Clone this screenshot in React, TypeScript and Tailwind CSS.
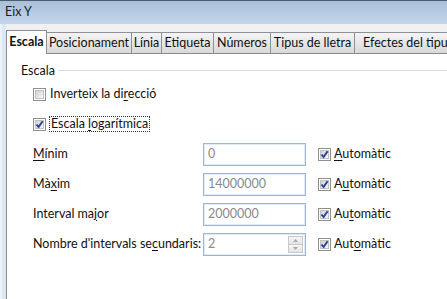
import React from 'react';

const TABS = [
  { label: 'Escala', w: 'w-[41px]', active: true },
  { label: 'Posicionament', w: 'w-[86px]' },
  { label: 'Línia', w: 'w-[31px]' },
  { label: 'Etiqueta', w: 'w-[53px]' },
  { label: 'Números', w: 'w-[58px]' },
  { label: 'Tipus de lletra', w: 'w-[85px]' },
  { label: 'Efectes del tipus', w: 'w-[110px] justify-start pl-[8px]' },
];

function Check({ checked }: { checked?: boolean }) {
  return (
    <div className="w-[13px] h-[13px] shrink-0 border border-[#8f8f8f] bg-white p-[1px]">
      <div className="relative w-full h-full border border-[#c2c2c2] bg-gradient-to-br from-[#d2d2d2] to-[#f7f7f7]">
        {checked && (
          <svg className="absolute -left-[1px] -top-[1px]" width="9" height="9" viewBox="0 0 9 9">
            <path d="M1.5 4.5 L3.6 7 L7.6 1.2" fill="none" stroke="#23419a" strokeWidth="1.9" />
          </svg>
        )}
      </div>
    </div>
  );
}

// label text with one underlined accelerator letter
function Acc({ pre, key1, post }: { pre: string; key1: string; post: string }) {
  return (
    <span className="whitespace-nowrap">
      {pre}
      <span className="underline underline-offset-2">{key1}</span>
      {post}
    </span>
  );
}

const ROWS = [
  { label: ['', 'M', 'ínim'], value: '0', auto: ['', 'A', 'utomàtic'] },
  { label: ['Mà', 'x', 'im'], value: '14000000', auto: ['A', 'u', 'tomàtic'] },
  { label: ['Interval ma', 'j', 'or'], value: '2000000', auto: ['Au', 't', 'omàtic'] },
  { label: ["Nombre d'intervals se", 'c', 'undaris:'], value: '2', auto: ['Aut', 'o', 'màtic'], spin: true },
];

export default function App() {
  return (
    <div className="w-[447px] h-[299px] overflow-hidden bg-[#f0f0f0] text-[12.5px] text-[#111] font-['Lato',sans-serif] flex flex-col">
      {/* Title bar */}
      <div className="h-[24px] shrink-0 border-t border-[#4d5d70] bg-gradient-to-b from-[#a9c0d9] to-[#c4d6ea] flex items-center pl-[5px] text-[#1c1c1c]">
        Eix Y
      </div>

      <div className="flex flex-1">
        {/* window frame */}
        <div className="w-[6px] shrink-0 bg-[#dde8f4] border-l-2 border-[#eef3f9]" />

        <div className="flex-1 flex flex-col pt-[5px] min-w-0">
          {/* Tabs */}
          <div className="flex items-end h-[24px] relative z-10">
            {TABS.map((t) =>
              t.active ? (
                <div
                  key={t.label}
                  className={`${t.w} h-[24px] shrink-0 bg-white border border-b-0 border-[#898c95] font-bold flex items-center justify-center -mb-px`}
                >
                  {t.label}
                </div>
              ) : (
                <div
                  key={t.label}
                  className={`${t.w} h-[21px] shrink-0 -ml-px bg-gradient-to-b from-[#f4f4f4] to-[#d9d9d9] border border-b-0 border-[#8d9096] flex items-center justify-center whitespace-nowrap`}
                >
                  {t.label}
                </div>
              )
            )}
          </div>

          {/* Panel */}
          <div className="flex-1 bg-white border-t border-l border-[#898c95] pt-[8px]">
            <div className="h-[17px] flex items-center pl-[14px]">
              <span className="leading-[16px]">Escala</span>
              <div className="flex-1 h-px bg-[#d5dfe5] ml-[3px]" />
            </div>

            <div className="pl-[26px]">
              <div className="h-[30px] flex items-center gap-[4px]">
                <Check />
                <Acc pre="Inverteix la di" key1="r" post="ecció" />
              </div>
              <div className="h-[30px] flex items-center gap-[3px]">
                <Check checked />
                <span className="border border-dotted border-[#333] px-px leading-[14px]">
                  <Acc pre="Escala " key1="l" post="ogarítmica" />
                </span>
              </div>

              {ROWS.map((r) => (
                <div key={r.value} className="h-[30px] flex items-center">
                  <div className="w-[170px] shrink-0">
                    <Acc pre={r.label[0]} key1={r.label[1]} post={r.label[2]} />
                  </div>
                  <div className="w-[103px] h-[23px] shrink-0 border border-[#9fb6d0] shadow-[inset_0_0_0_1px_#e2eaf3] flex items-center pl-[4px] text-[#8a8a8a]">
                    <span className="flex-1">{r.value}</span>
                    {r.spin && (
                      <div className="w-[15px] h-[17px] mr-[2px] flex flex-col">
                        <div className="flex-1 border border-[#c8c8c8] bg-gradient-to-b from-[#f6f6f6] to-[#e4e4e4] flex items-center justify-center">
                          <svg width="5" height="3" viewBox="0 0 5 3"><path d="M0 3 L2.5 0 L5 3Z" fill="#a8a8a8" /></svg>
                        </div>
                        <div className="flex-1 border border-t-0 border-[#c8c8c8] bg-gradient-to-b from-[#f6f6f6] to-[#e4e4e4] flex items-center justify-center">
                          <svg width="5" height="3" viewBox="0 0 5 3"><path d="M0 0 L2.5 3 L5 0Z" fill="#a8a8a8" /></svg>
                        </div>
                      </div>
                    )}
                  </div>
                  <div className="ml-[12px] flex items-center gap-[3px]">
                    <Check checked />
                    <Acc pre={r.auto[0]} key1={r.auto[1]} post={r.auto[2]} />
                  </div>
                </div>
              ))}
            </div>
          </div>
        </div>
      </div>
    </div>
  );
}
